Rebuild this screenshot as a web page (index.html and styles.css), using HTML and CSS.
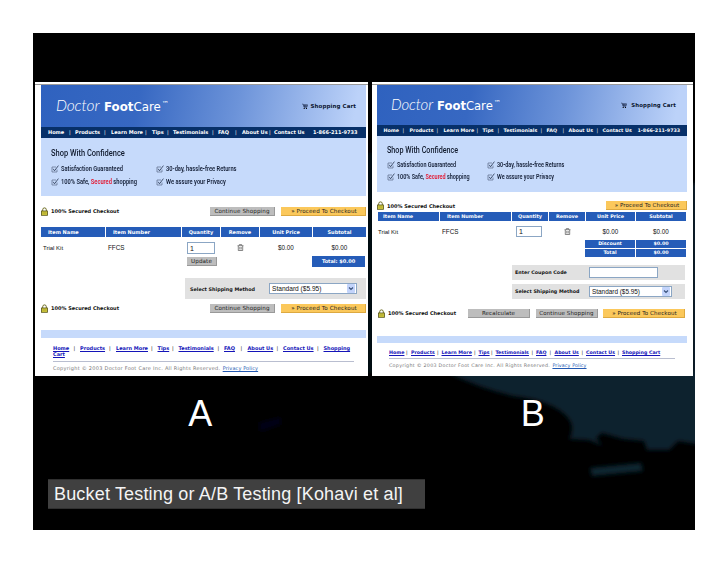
FILE: index.html
```html
<!DOCTYPE html>
<html lang="en">
<head>
<meta charset="utf-8">
<title>Bucket Testing or A/B Testing</title>
<link rel="stylesheet" href="styles.css">
</head>
<body>
<svg width="0" height="0" class="defs" aria-hidden="true">
  <symbol id="check" viewBox="0 0 8 8"><path d="M5 2H1v5h5V4.500" fill="none" stroke="#5a6988" stroke-width=".7"/><path d="M2.200 3.800l1.300 2L7.400.6" fill="none" stroke="#26344f" stroke-width=".8"/></symbol>
  <symbol id="lock" viewBox="0 0 7 9"><path d="M1.7 4.5V2.7a1.8 1.8 0 0 1 3.6 0v1.8" fill="none" stroke="#6c6a20" stroke-width="1"/><rect x=".5" y="4" width="6" height="4.3" fill="#d3cb3c" stroke="#55531a" stroke-width=".8"/><path d="M1.5 6h4" stroke="#8a842a" stroke-width=".6"/></symbol>
  <symbol id="trash" viewBox="0 0 7 7"><path d="M.5 1.7h6M2.3 1.5V.6h2.4v.9M1.3 2v4.500h4.400V2M2.800 3v2.500M4.200 3v2.500" fill="none" stroke="#555" stroke-width=".7"/></symbol>
  <symbol id="cart" viewBox="0 0 7 7"><path d="M.2.7h1.2l.9 3.6h3.4L6.5 1.500H1.700M2 2.900h4M3 1.500v2.800M4.500 1.500v2.800" fill="none" stroke="#1a2747" stroke-width=".7"/><circle cx="2.600" cy="5.800" r=".7"/><circle cx="5.200" cy="5.800" r=".7"/></symbol>
  <symbol id="arrow" viewBox="0 0 8 9"><rect width="8" height="9" rx="1" fill="#c3d4fb"/><path d="M2 3.500l2 2 2-2" fill="none" stroke="#3d557f" stroke-width="1.200"/></symbol>
</svg>
<main class="slide">
  <svg class="backdrop" viewBox="0 0 662 497" aria-hidden="true">
    <defs><filter id="soft"><feGaussianBlur stdDeviation="2"/></filter></defs>
    <g filter="url(#soft)">
      <path d="M412 338Q445 355 480 363Q522 368 536 386Q542 395 536 406L556 407L570 413L563 405L569 400L590 406L611 408L614 417L636 417L645 408L670 412V150H659V338Z" fill="#10242f"/>
      <path d="M557 435L608 430L610 438L559 443Z" fill="#0b2632"/>
      <path d="M225 390L247 384L249 391L227 399Z" fill="#030419"/>
      <path d="M335 120h4v220h-4z" fill="#04101f"/>
    </g>
  </svg>
  <div class="shots">
    <section class="shot a">
      <div class="topline"></div>
      <div class="page">
        <header class="brand"><div class="logo"><i>Doctor</i><b>Foot</b><span>Care</span><sup>™</sup></div><div class="cart"><svg><use href="#cart"/></svg><span>Shopping Cart</span></div></header>
        <nav class="nav"><span>Home</span><em>|</em><span>Products</span><em>|</em><span>Learn More</span><em>|</em><span>Tips</span><em>|</em><span>Testimonials</span><em>|</em><span>FAQ</span><em>|</em><span>About Us</span><em>|</em><span>Contact Us</span><span>1-866-211-9733</span></nav>
        <div class="promo"><h2>Shop With Confidence</h2>
          <ul><li><svg><use href="#check"/></svg><span>Satisfaction Guaranteed</span></li><li><svg><use href="#check"/></svg><span>30-day, hassle-free Returns</span></li><li><svg><use href="#check"/></svg><span>100% Safe, <mark>Secured</mark> shopping</span></li><li><svg><use href="#check"/></svg><span>We assure your Privacy</span></li></ul>
        </div>
        <div class="actions first"><div class="secure"><svg><use href="#lock"/></svg>100% Secured Checkout</div><div class="btn gray">Continue Shopping</div><div class="btn gold">» Proceed To Checkout</div></div>
        <div class="cols head"><span>Item Name</span><span>Item Number</span><span>Quantity</span><span>Remove</span><span>Unit Price</span><span>Subtotal</span></div>
        <div class="cols item"><span>Trial Kit</span><span>FFCS</span><span class="qty">1</span><svg><use href="#trash"/></svg><span>$0.00</span><span>$0.00</span></div>
        <div class="sumrow"><div class="btn gray update">Update</div><div class="total">Total: $0.00</div></div>
        <div class="option"><b>Select Shipping Method</b><div class="field">Standard ($5.95)<svg><use href="#arrow"/></svg></div></div>
        <div class="actions second"><div class="secure"><svg><use href="#lock"/></svg>100% Secured Checkout</div><div class="btn gray">Continue Shopping</div><div class="btn gold">» Proceed To Checkout</div></div>
        <div class="band"></div>
        <footer>
          <div class="links"><a>Home</a><em>|</em><a>Products</a><em>|</em><a>Learn More</a><em>|</em><a>Tips</a><em>|</em><a>Testimonials</a><em>|</em><a>FAQ</a><em>|</em><a>About Us</a><em>|</em><a>Contact Us</a><em>|</em><a>Shopping</a><a>Cart</a></div>
          <p>Copyright © 2003 Doctor Foot Care Inc. All Rights Reserved. <a>Privacy Policy</a></p>
        </footer>
      </div>
    </section>
    <section class="shot b">
      <div class="topline"></div>
      <div class="page">
        <header class="brand"><div class="logo"><i>Doctor</i><b>Foot</b><span>Care</span><sup>™</sup></div><div class="cart"><svg><use href="#cart"/></svg><span>Shopping Cart</span></div></header>
        <nav class="nav"><span>Home</span><em>|</em><span>Products</span><em>|</em><span>Learn More</span><em>|</em><span>Tips</span><em>|</em><span>Testimonials</span><em>|</em><span>FAQ</span><em>|</em><span>About Us</span><em>|</em><span>Contact Us</span><span>1-866-211-9733</span></nav>
        <div class="promo"><h2>Shop With Confidence</h2>
          <ul><li><svg><use href="#check"/></svg><span>Satisfaction Guaranteed</span></li><li><svg><use href="#check"/></svg><span>30-day, hassle-free Returns</span></li><li><svg><use href="#check"/></svg><span>100% Safe, <mark>Secured</mark> shopping</span></li><li><svg><use href="#check"/></svg><span>We assure your Privacy</span></li></ul>
        </div>
        <div class="actions first"><div class="secure"><svg><use href="#lock"/></svg>100% Secured Checkout</div><div class="btn gold">» Proceed To Checkout</div></div>
        <div class="cols head"><span>Item Name</span><span>Item Number</span><span>Quantity</span><span>Remove</span><span>Unit Price</span><span>Subtotal</span></div>
        <div class="cols item"><span>Trial Kit</span><span>FFCS</span><span class="qty">1</span><svg><use href="#trash"/></svg><span>$0.00</span><span>$0.00</span></div>
        <div class="totals"><span>Discount</span><span>$0.00</span><span>Total</span><span>$0.00</span></div>
        <div class="option coupon"><b>Enter Coupon Code</b><div class="field"></div></div>
        <div class="option"><b>Select Shipping Method</b><div class="field">Standard ($5.95)<svg><use href="#arrow"/></svg></div></div>
        <div class="actions second"><div class="secure"><svg><use href="#lock"/></svg>100% Secured Checkout</div><div class="btn gray">Recalculate</div><div class="btn gray">Continue Shopping</div><div class="btn gold">» Proceed To Checkout</div></div>
        <div class="band"></div>
        <footer>
          <div class="links"><a>Home</a><em>|</em><a>Products</a><em>|</em><a>Learn More</a><em>|</em><a>Tips</a><em>|</em><a>Testimonials</a><em>|</em><a>FAQ</a><em>|</em><a>About Us</a><em>|</em><a>Contact Us</a><em>|</em><a>Shopping Cart</a></div>
          <p>Copyright © 2003 Doctor Foot Care Inc. All Rights Reserved. <a>Privacy Policy</a></p>
        </footer>
      </div>
    </section>
  </div>
  <div class="letters"><span>A</span><span>B</span></div>
  <div class="caption">Bucket Testing or A/B Testing [Kohavi et al]</div>
</main>
</body>
</html>
```
FILE: styles.css
```css
* { box-sizing: border-box; }
body { margin: 0; padding: 33px; width: 728px; height: 563px; background: #fff; font-family: "Liberation Sans", Arial, sans-serif; overflow: hidden; }
.defs { position: absolute; }
.slide { position: relative; width: 662px; height: 497px; background: #000; padding: 49px 2px 0; overflow: hidden; }
.backdrop { position: absolute; inset: 0; width: 662px; height: 497px; }

.shots { position: relative; display: flex; gap: 4px; }
.shot { height: 294px; background: #fff; overflow: hidden; font: 5px/8px "DejaVu Sans", Verdana, sans-serif; color: #111; white-space: nowrap; }
.shot.a { width: 333px; padding-top: 2px; }
.shot.b { width: 321px; padding-top: 2px; }
.topline { height: 1px; background: #999; }
.page { margin-left: 6px; width: 325px; }
.b .page { margin-left: 5px; width: 310px; }

.brand { height: 42px; background: linear-gradient(100deg, #2f62bf 0%, #3768c2 30%, #6c93d9 60%, #bcd2f9 96%); display: flex; justify-content: space-between; padding: 0 10px 0 15px; color: #fff; }
.logo { display: flex; align-items: baseline; line-height: 41px; font-size: 11.800px; }
.logo i { font: italic 300 15.500px/41px Lato, sans-serif; width: 48px; letter-spacing: -.1px; }
.logo sup { font-size: 7px; line-height: 5px; vertical-align: baseline; align-self: flex-start; margin: 17px 0 0 1px; }
.cart { display: flex; align-items: center; gap: 2px; font-weight: bold; font-size: 5.500px; letter-spacing: .1px; color: #0c1730; }
.cart svg { width: 6px; height: 7px; }
.b .brand { height: 40px; padding: 0 11px 0 14px; }
.b .logo { line-height: 39px; font-size: 11.600px; }
.b .logo i { line-height: 39px; width: 46px; font-size: 15px; }
.b .logo sup { margin-top: 16px; }
.b .cart { gap: 4px; font-size: 5.400px; }

.nav { display: grid; height: 11px; line-height: 11px; background: #073069; color: #fff; font-weight: bold; padding-left: 7px; grid-template-columns: 21px 6px 29px 7px 34px 7px 15px 6px 39px 6px 17px 7px 27px 5px 39px 50px; }
.b .nav { padding-left: 6.500px; font-size: 4.800px; grid-template-columns: 19px 7px 27px 7px 33px 6px 15px 6px 37px 6px 16px 6px 28px 6px 35px 46px; }
em { font-style: normal; font-weight: normal; }

.promo { height: 58px; background: #c6dafb; padding: 9px 0 0 10px; font-family: Roboto, sans-serif; }
.promo h2 { margin: 0; font-size: 9px; line-height: 12px; font-weight: 500; color: #111b2e; transform: scaleX(.83); transform-origin: 0 0; }
.promo ul { margin: 4px 0 0; padding: 0; list-style: none; display: grid; grid-template-columns: 105px auto; grid-auto-rows: 12.500px; }
.promo li { display: flex; align-items: center; gap: 2px; font-size: 6.500px; font-weight: 600; color: #152038; }
.promo li svg { width: 8px; height: 8px; }
.promo li span { transform: scaleX(.88); transform-origin: 0 50%; }
mark { background: none; color: #e3152e; }
.b .promo { height: 56px; padding-top: 8px; }
.b .promo ul { grid-template-columns: 100px auto; margin-top: 3px; grid-auto-rows: 12px; }
.b .promo h2 { transform: scaleX(.8); }
.b .promo li span { transform: scaleX(.84); }

.actions { display: flex; height: 9px; margin-top: 11px; }
.secure { display: flex; align-items: center; gap: 3px; font-weight: bold; margin-right: auto; line-height: 7px; padding-bottom: 1px; }
.secure svg { width: 7px; height: 9px; }
.btn { text-align: center; font-size: 5.600px; letter-spacing: .12px; line-height: 8px; height: 9px; border-right: 1px solid #999; border-bottom: 1px solid #999; color: #222; }
.gray { width: 65px; background: #bdbdbd; margin-right: 6px; }
.gold { width: 85px; background: #fbc85b; border-color: #dda940; padding-left: 2px; }
.a .second { margin-top: 5px; }
.b .first { height: 10px; margin-top: 9px; }
.b .first .secure { line-height: 8px; }
.b .first .btn { width: 81px; }
.b .btn { font-size: 5.500px; }
.b .second { margin: 10px 2px 0 1px; }
.b .second .gray { width: 62px; }
.b .second .gold { width: 82px; margin-left: -1px; }

.cols { display: grid; grid-template-columns: 64px 75px 38px 38px 52px 53px; column-gap: 1px; width: 325px; }
.b .cols { grid-template-columns: 61px 71px 36px 36px 49px 50px; width: 310px; padding-left: 1px; }
.head { margin-top: 11px; height: 10px; line-height: 10px; font-weight: bold; color: #fff; }
.head span { background: #255cb8; text-align: center; }
.head span:nth-child(-n+2) { text-align: left; padding-left: 7px; }
.b .head { margin-top: 1px; height: 9px; line-height: 9px; font-size: 4.900px; }
.b .head span:first-child { padding-left: 5px; }
.item { font: 6.300px/12px "Liberation Sans", Arial, sans-serif; height: 13px; margin-top: 4px; text-align: center; align-items: center; }
.item > span:nth-child(-n+2) { text-align: left; padding-left: 2px; }
.item > span:nth-child(1) { font-size: 6px; }
.item svg { width: 7px; height: 7px; margin: auto; }
.item .qty { width: 28px; height: 12px; line-height: 11px; border: 1px solid #8ba6c4; margin-left: 5px; padding-left: 2px; text-align: left; font-size: 7px; }
.b .item > span:first-child { padding-left: 0; }
.b .item .qty { width: 26px; height: 11px; line-height: 10px; margin-left: 4px; }

.sumrow { display: flex; justify-content: space-between; margin: 2px 1px 0 146px; height: 11px; }
.sumrow .update { width: 30px; margin-top: 1px; }
.total { width: 53px; background: #255cb8; color: #fff; font-weight: bold; line-height: 11px; text-align: center; }
.totals { display: grid; grid-template-columns: 50px 50px; gap: 1px; margin: 2px 0 0 208px; color: #fff; font-weight: bold; text-align: center; font-size: 4.800px; line-height: 8px; }
.totals span { background: #255cb8; }

.option { display: flex; align-items: center; justify-content: space-between; height: 21px; margin: 11px 0 0 144px; padding: 0 9px 0 5px; background: #e1e1e1; font-size: 4.850px; }
.field { display: flex; align-items: center; justify-content: space-between; width: 88px; height: 11px; padding: 0 1px 0 2px; border: 1px solid #8ba6c4; background: #fff; font: 6.600px/9px "Liberation Sans", Arial, sans-serif; }
.field svg { width: 8px; height: 9px; }
.b .option { height: 15px; margin: 4px 2px 0 135px; padding: 0 13px 0 3px; font-size: 4.800px; }
.b .option .field { width: 83px; font-size: 6.400px; }
.b .option.coupon { margin-top: 8px; padding-right: 27px; }
.b .coupon .field { width: 69px; }

.band { height: 8px; margin-top: 17px; background: #c6dafb; }
.b .band { height: 7px; margin-top: 18px; }
footer { margin: 7px 12px 0; }
.links { display: grid; grid-template-columns: 20.500px 6.500px 29px 7px 35px 6.500px 14.500px 6.500px 39px 6.500px 16.500px 7px 29px 6.500px 34px 6.500px 30px; line-height: 6px; font-weight: bold; border-bottom: 1px solid #b9bed0; padding-bottom: 4px; }
a { color: #1414b8; text-decoration: underline; }
footer p { margin: 2px 0 0; line-height: 9px; color: #777; letter-spacing: .27px; }
footer p a { color: #2359b2; letter-spacing: .1px; margin-left: .5px; }
.b .links { font-size: 4.750px; padding-bottom: 2px; grid-template-columns: 17px 5px 26px 4.500px 32.500px 4.500px 12.500px 4.500px 36px 4.500px 13.500px 5px 27px 4.500px 31.500px 4.500px 38px; }
.b footer { margin-top: 7px; }
.b .option.coupon .field { width: 69px; }
.b footer p { font-size: 4.800px; }

.letters { position: relative; display: flex; color: #fff; font-size: 36px; line-height: 40px; margin-top: 18px; padding-left: 1px; }
.letters span { width: 331px; text-align: center; }
.letters span + span { padding-left: 8px; }
.caption { position: relative; width: 377px; height: 30px; margin: 45px 0 0 13px; padding-left: 6px; background: #404040; border: 1px solid #303030; border-width: 1px 0; color: #f4f4f4; font-size: 18px; letter-spacing: .17px; line-height: 29px; white-space: nowrap; }
```
